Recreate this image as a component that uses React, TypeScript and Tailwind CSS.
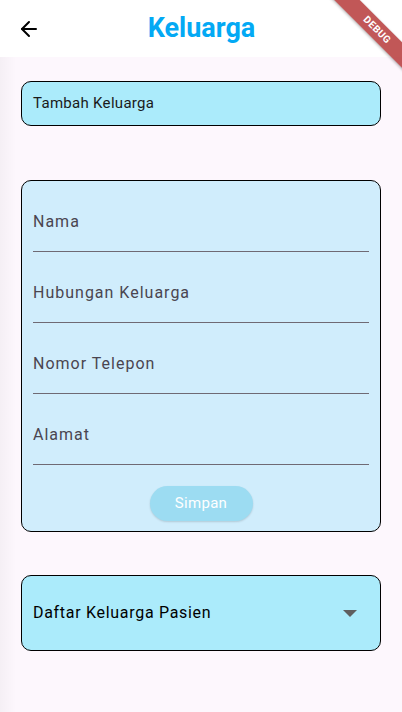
import { ArrowLeft } from "lucide-react";

function Field({ label }: { label: string }) {
  return (
    <div className="pt-[29px]">
      <div className="h-[41px] text-[16px] leading-[24px] tracking-[1px] text-[#4a4550]">{label}</div>
      <div className="h-px bg-[#6f6a74]" />
    </div>
  );
}

export default function App() {
  return (
    <div
      className="relative w-[402px] h-[712px] overflow-hidden bg-[#fdf7fd]"
      style={{ fontFamily: "Roboto, 'Noto Sans', sans-serif" }}
    >
      <header className="h-[57px] bg-white flex items-center relative">
        <button className="w-[58px] h-[56px] flex items-center justify-center">
          <ArrowLeft size={24} strokeWidth={2} className="text-black" />
        </button>
        <h1 className="absolute left-0 right-0 text-center text-[27px] font-bold text-[#03a9f4] leading-[57px] pointer-events-none pl-[1px]">
          Keluarga
        </h1>
      </header>

      <main className="px-[21px] pt-[24px]">
        <div className="h-[45px] rounded-[10px] border border-black bg-[#abebfb] flex items-center px-[11px] text-[15px] tracking-[0.3px] text-[#1a1a1a]">
          Tambah Keluarga
        </div>

        <div className="mt-[54px] rounded-[10px] border border-black bg-[#d0edfc] px-[11px] pb-[10px]">
          <Field label="Nama" />
          <Field label="Hubungan Keluarga" />
          <Field label="Nomor Telepon" />
          <Field label="Alamat" />
          <div className="flex justify-center pt-[21px]">
            <button className="w-[103px] h-[35px] rounded-full bg-[#9cdcf2] text-white text-[15px] tracking-[0.3px] shadow-[0_1px_2px_rgba(0,0,0,0.15)]">
              Simpan
            </button>
          </div>
        </div>

        <div className="mt-[43px] h-[76px] rounded-[10px] border border-black bg-[#abebfb] flex items-center pl-[11px] pr-[23px]">
          <span className="flex-1 text-[16px] text-black tracking-[0.7px]">Daftar Keluarga Pasien</span>
          <svg width="14" height="7" viewBox="0 0 14 7">
            <path d="M0 0 L14 0 L7 7 Z" fill="#5f5f5f" />
          </svg>
        </div>
      </main>

      <div className="absolute left-0 top-[57px] bottom-0 w-[16px] bg-gradient-to-r from-[rgba(0,0,0,0.03)] to-transparent pointer-events-none" />

      <div className="absolute top-[21px] right-[-35px] w-[120px] h-[18px] rotate-45 bg-[rgba(176,40,40,0.78)] text-center text-white text-[10px] font-bold leading-[18px] tracking-[0.5px] shadow-[0_1px_3px_rgba(0,0,0,0.3)]">
        DEBUG
      </div>
    </div>
  );
}
